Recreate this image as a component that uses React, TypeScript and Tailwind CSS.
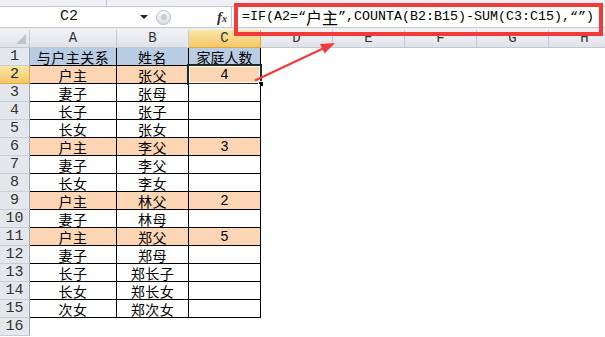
import React from "react";

type Row = {
  a: string;
  b: string;
  c: string;
  kind: "head" | "owner" | "plain" | "empty";
};

const rows: Row[] = [
  { a: "与户主关系", b: "姓名", c: "家庭人数", kind: "head" },
  { a: "户主", b: "张父", c: "4", kind: "owner" },
  { a: "妻子", b: "张母", c: "", kind: "plain" },
  { a: "长子", b: "张子", c: "", kind: "plain" },
  { a: "长女", b: "张女", c: "", kind: "plain" },
  { a: "户主", b: "李父", c: "3", kind: "owner" },
  { a: "妻子", b: "李父", c: "", kind: "plain" },
  { a: "长女", b: "李女", c: "", kind: "plain" },
  { a: "户主", b: "林父", c: "2", kind: "owner" },
  { a: "妻子", b: "林母", c: "", kind: "plain" },
  { a: "户主", b: "郑父", c: "5", kind: "owner" },
  { a: "妻子", b: "郑母", c: "", kind: "plain" },
  { a: "长子", b: "郑长子", c: "", kind: "plain" },
  { a: "长女", b: "郑长女", c: "", kind: "plain" },
  { a: "次女", b: "郑次女", c: "", kind: "plain" },
  { a: "", b: "", c: "", kind: "empty" },
];

const cjk = { fontFamily: '"Noto Sans CJK SC", "Noto Sans", sans-serif' };
const mono = { fontFamily: '"Liberation Mono", "DejaVu Sans Mono", monospace' };

const letters = ["D", "E", "F", "G", "H"];

const FormulaBar = () => {
  return (
    <div>
      <div className="flex h-[7px] bg-[#eef0f3] border-b border-[#c3c8cf]">
        <div className="w-[107px] border-r border-[#c3c8cf]"></div>
      </div>
      <div className="flex h-[21px] items-center bg-white border-b border-[#c3c8cf]">
        <div className="w-[138px] text-center text-[15px] text-[#111]" style={mono}>
          C2
        </div>
        <div className="w-[12px] flex justify-center">
          <div className="w-0 h-0 border-l-[4px] border-r-[4px] border-t-[4px] border-l-transparent border-r-transparent border-t-[#222]"></div>
        </div>
        <div className="ml-[6px] w-[15px] h-[15px] rounded-full border border-[#b3b9c1] bg-gradient-to-b from-[#fbfbfc] to-[#d9dde2] flex items-center justify-center">
          <div className="w-[6px] h-[6px] rounded-full bg-[#c9ced5]"></div>
        </div>
        <div className="ml-[46px] text-[15px] italic font-bold text-[#333]" style={{ fontFamily: '"Liberation Serif", serif' }}>
          f<span className="text-[10px]">x</span>
        </div>
        <div className="ml-[4px] h-full border-l border-[#c3c8cf]"></div>
        <div className="ml-[10px] flex items-center text-[13.33px] text-black leading-none" style={mono}>
          =IF(A2=“<span className="text-[16px]" style={cjk}>户主</span>”,COUNTA(B2:B15)-SUM(C3:C15),“”)
        </div>
      </div>
      <div className="h-[2px] bg-[#eef0f3]"></div>
    </div>
  );
};

const ColumnHeader = () => {
  const base = "h-[18px] flex items-center justify-center border-r border-b border-[#c5cad2] text-[14px] text-[#333] bg-gradient-to-b from-[#f1f3f6] to-[#dfe3e8]";
  return (
    <div className="flex" style={mono}>
      <div className="relative w-[30px] h-[18px] border-r border-b border-[#c5cad2] bg-gradient-to-b from-[#f1f3f6] to-[#dfe3e8] shrink-0">
        <div className="absolute right-[3px] bottom-[3px] w-0 h-0" style={{ borderBottom: "10px solid #bfc4cb", borderLeft: "10px solid transparent" }}></div>
      </div>
      <div className={`${base} w-[87px] shrink-0`}>A</div>
      <div className={`${base} w-[72px] shrink-0`}>B</div>
      <div className="h-[18px] w-[72px] shrink-0 flex items-center justify-center border-r border-b border-[#e0a93a] text-[14px] text-[#333] bg-gradient-to-b from-[#fbe7a6] to-[#f3c766]">
        C
      </div>
      {letters.map((l) => (
        <div key={l} className={`${base} w-[72px] shrink-0`}>
          {l}
        </div>
      ))}
    </div>
  );
};

const SheetRow = ({ row, index }: { row: Row; index: number }) => {
  const fill = row.kind === "head" ? "bg-[#b8cce4]" : row.kind === "owner" ? "bg-[#fcd5b4]" : "bg-white";
  const border = row.kind === "empty" ? "" : "border-r border-b border-black";
  const cell = `h-[18px] shrink-0 flex items-center justify-center overflow-hidden text-[14px] leading-[14px] text-black ${fill} ${border}`;
  const selectedRow = index === 2;
  return (
    <div className="flex">
      <div
        className={`w-[30px] h-[18px] shrink-0 flex items-center justify-center text-[15px] leading-[15px] border-r border-b ${
          selectedRow ? "bg-gradient-to-b from-[#fbe7a6] to-[#f3c766] border-r-[#e0a93a] border-b-[#e0a93a] text-[#222]" : "bg-[#e4e7ec] border-r-[#9ea7b3] border-b-[#c9cdd4] text-[#333]"
        }`}
        style={mono}
      >
        {index}
      </div>
      <div className={`${cell} w-[87px] tracking-[0.5px]`} style={cjk}>
        {row.a}
      </div>
      <div className={`${cell} w-[72px] tracking-[0.5px]`} style={cjk}>
        {row.b}
      </div>
      <div className={`${cell} w-[72px] relative overflow-visible`} style={row.kind === "head" ? cjk : mono}>
        {row.c}
        {selectedRow && (
          <div className="absolute left-[-2px] top-[-2px] right-[-2px] bottom-[-2px] border-2 border-[#1f2a22]">
            <div className="absolute inset-0 border border-white"></div>
            <div className="absolute right-[-4px] bottom-[-4px] w-[6px] h-[6px] bg-black border border-white"></div>
          </div>
        )}
      </div>
      {letters.map((l) => (
        <div key={l} className="w-[72px] h-[18px] shrink-0 bg-white"></div>
      ))}
    </div>
  );
};

const App = () => {
  return (
    <div className="relative w-[605px] h-[337px] overflow-hidden bg-white">
      <FormulaBar />
      <ColumnHeader />
      {rows.map((row, i) => (
        <SheetRow key={i} row={row} index={i + 1} />
      ))}

      <div className="absolute left-[234px] top-[3px] w-[369px] h-[33px] border-4 border-[#f23a3a] pointer-events-none"></div>

      <svg className="absolute left-0 top-0 pointer-events-none" width="605" height="337">
        <line x1="256" y1="80" x2="323" y2="48.6" stroke="#f03c3c" strokeWidth="2.2" strokeLinecap="round" />
        <polygon points="335,43 324.6,53.6 320,44" fill="#f03c3c" />
      </svg>
    </div>
  );
};

export default App;
